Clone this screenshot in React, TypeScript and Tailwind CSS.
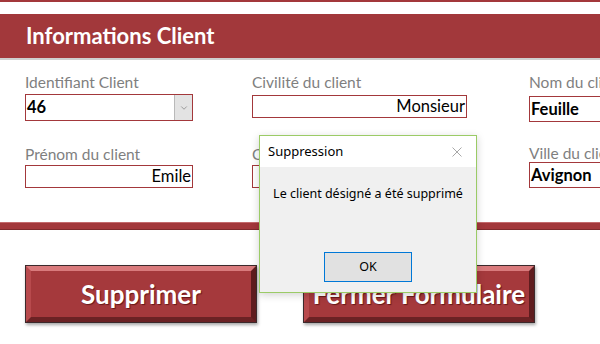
import { ChevronDown } from 'lucide-react';

const Field = ({
    label,
    value,
    bold,
    right,
    combo,
    boxClass,
}: {
    label: string;
    value: string;
    bold?: boolean;
    right?: boolean;
    combo?: boolean;
    boxClass: string;
}) => (
    <div className="flex flex-col">
        <span className="text-[15.5px] leading-[18px] text-[#7f7f7f] whitespace-nowrap">{label}</span>
        <div className={`flex items-stretch border-[1.5px] border-[#a3383b] bg-white ${boxClass}`}>
            <span
                className={`flex-1 flex items-center px-[1px] text-[16.5px] text-black whitespace-nowrap overflow-hidden ${
                    right ? 'justify-end' : 'justify-start'
                } ${bold ? 'font-bold' : ''}`}
            >
                {value}
            </span>
            {combo && (
                <span className="w-[18px] flex items-center justify-center bg-[#e3e3e3] border-l border-[#b9b9b9]">
                    <ChevronDown size={10} strokeWidth={1.5} className="text-[#6f6f6f]" />
                </span>
            )}
        </div>
    </div>
);

const BevelButton = ({ label, width }: { label: string; width: string }) => (
    <div className={`${width} h-[58px] border border-[#3c2a2c] shadow-[1px_2px_3px_rgba(0,0,0,0.35)]`}>
        <div className="h-full border-[5px] border-t-[#d97a7c] border-l-[#b84a4d] border-r-[#5e1c1e] border-b-[#6b2224] bg-[#a5393c] flex items-center justify-center">
            <span className="text-white font-bold text-[26px] leading-none [text-shadow:1px_1px_1px_rgba(60,0,0,0.6)] whitespace-nowrap">
                {label}
            </span>
        </div>
    </div>
);

export default function App() {
    return (
        <div
            className="relative w-[600px] h-[344px] overflow-hidden bg-white"
            style={{ fontFamily: 'Lato, "Open Sans", sans-serif' }}
        >
            {/* top strip */}
            <div className="h-[2px] bg-[#a3383b]" />

            {/* header band */}
            <div className="mt-[12px] h-[46px] bg-[#a2383b] border-b-[2px] border-[#cfcfcf] flex items-center pl-[26px]">
                <h1 className="text-white font-bold text-[22px] leading-none">Informations Client</h1>
            </div>

            {/* form fields */}
            <div className="flex pl-[25px] pt-[13px]">
                <div className="w-[227px] shrink-0 flex flex-col gap-[24px]">
                    <Field label="Identifiant Client" value="46" bold combo boxClass="w-[168px] h-[27px] mt-[3px]" />
                    <Field label="Prénom du client" value="Emile" right boxClass="w-[168px] h-[23px] mt-[2px]" />
                </div>
                <div className="w-[277px] shrink-0 flex flex-col gap-[27px]">
                    <Field label="Civilité du client" value="Monsieur" right boxClass="w-[215px] h-[23px] mt-[4px]" />
                    <Field label="Civilité du client" value="" boxClass="w-[215px] h-[23px] mt-[2px]" />
                </div>
                <div className="w-[120px] shrink-0 flex flex-col gap-[22px]">
                    <Field label="Nom du client" value="Feuille" bold boxClass="w-[120px] h-[26px] mt-[5px]" />
                    <Field label="Ville du client" value="Avignon" bold boxClass="w-[120px] h-[26px] mt-[0px]" />
                </div>
            </div>

            {/* separator */}
            <div className="mt-[34px] h-[8px] bg-[#a3383b] border-t border-[#c46a6c] border-b border-b-[#7e2a2c]" />

            {/* buttons */}
            <div className="flex pl-[25px] pt-[35px] gap-[46px]">
                <BevelButton label="Supprimer" width="w-[232px]" />
                <BevelButton label="Fermer Formulaire" width="w-[232px]" />
            </div>

            {/* message box */}
            <div
                className="absolute left-[259px] top-[135px] w-[218px] h-[158px] border border-[#9bcb66] bg-[#f0f0f0] shadow-[0_2px_8px_rgba(0,0,0,0.18)] flex flex-col"
                style={{ fontFamily: '"Noto Sans", "Open Sans", sans-serif' }}
            >
                <div className="h-[31px] bg-white flex items-center justify-between pl-[8px] pr-[14px]">
                    <span className="text-[13px] text-black">Suppression</span>
                    <svg width="10" height="10" viewBox="0 0 10 10" className="text-[#a8a8a8]">
                        <path d="M0.5 0.5 L9.5 9.5 M9.5 0.5 L0.5 9.5" stroke="currentColor" strokeWidth="1" fill="none" />
                    </svg>
                </div>
                <div className="flex-1 flex flex-col items-center">
                    <p className="mt-[18px] text-[12.5px] text-black whitespace-nowrap">Le client désigné a été supprimé</p>
                    <div className="mt-auto mb-[10px] w-[88px] h-[30px] bg-[#e1e1e1] border border-[#0078d7] flex items-center justify-center text-[12.5px] text-black">
                        OK
                    </div>
                </div>
            </div>
        </div>
    );
}
